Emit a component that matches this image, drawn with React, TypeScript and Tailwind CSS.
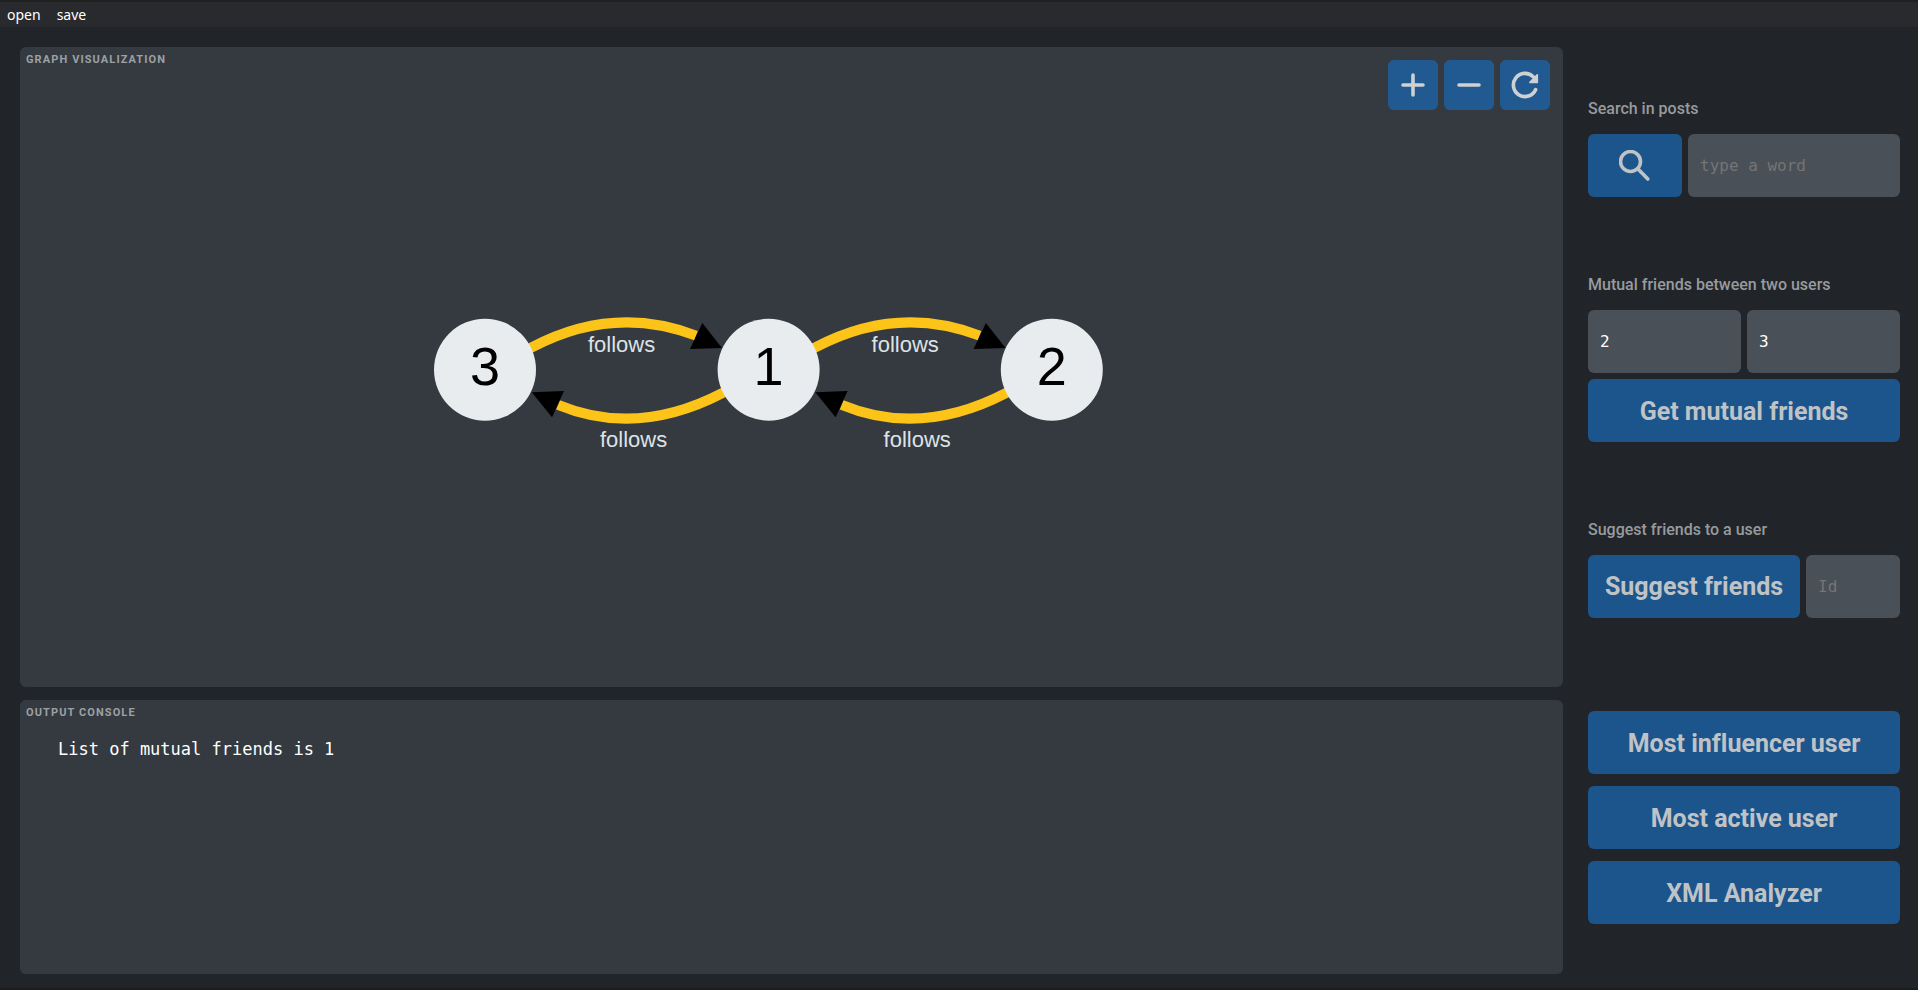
import type { ReactNode } from "react";

const BUTTON_BASE =
  "flex h-[63px] min-w-0 cursor-pointer items-center justify-center rounded-md bg-[#1c558b] text-[#c0c3c6] hover:bg-[#2264a3]";
const BUTTON = `${BUTTON_BASE} pt-[2px] text-[25px] font-bold whitespace-nowrap [font-variant-ligatures:none]`;
const FIELD =
  "h-[63px] min-w-0 rounded-md bg-[#495057] px-3 font-['DejaVu_Sans_Mono',monospace] text-base text-white outline-none placeholder:text-[#757575]";
const TOOL =
  "flex size-[50px] cursor-pointer items-center justify-center rounded-md bg-[#215a91] text-[#cfd0d2] hover:bg-[#2264a3]";

const users = [
  { id: "3", x: 465 },
  { id: "1", x: 748.6 },
  { id: "2", x: 1031.8 },
];

function Icon({ children }: { children: ReactNode }) {
  return (
    <svg
      viewBox="-16 -16 32 32"
      aria-hidden="true"
      className="size-8 fill-none stroke-current stroke-[3.6] [stroke-linecap:round] [stroke-linejoin:round]"
    >
      {children}
    </svg>
  );
}

function FollowPair({ x }: { x: number }) {
  return (
    <g transform={`translate(${x} 0)`}>
      <path d="M40 304L47 300.3Q129 257.2 211 288.7" fill="none" stroke="#fcc419" strokeWidth="10" />
      <path d="M217.3 276L205 302L237 301Z" />
      <path d="M244.5 342.3L237.5 346Q152 390.5 73 357.8" fill="none" stroke="#fcc419" strokeWidth="10" />
      <path d="M46.7 345.3L79 344L67 370.3Z" />
      <g fill="#dee2e6" fontSize="22">
        <text x="103" y="305">follows</text>
        <text x="115" y="400">follows</text>
      </g>
    </g>
  );
}

function Graph() {
  return (
    <svg
      viewBox="0 0 1543 640"
      role="img"
      aria-label="Follow graph"
      className="h-full min-h-0 w-full [grid-area:1/1] font-['Liberation_Sans',sans-serif]"
    >
      {users.slice(0, -1).map((user) => (
        <FollowPair key={user.id} x={user.x} />
      ))}
      {users.map((user) => (
        <g key={user.id}>
          <circle cx={user.x} cy="322.7" r="51" fill="#e9ecef" />
          <text x={user.x} y="338" fontSize="54" textAnchor="middle">
            {user.id}
          </text>
        </g>
      ))}
    </svg>
  );
}

function PanelTitle({ children }: { children: ReactNode }) {
  return (
    <h2 className="text-[11px] leading-4 font-bold tracking-widest text-[#9da0a4] uppercase">{children}</h2>
  );
}

function Group({ label, htmlFor, children }: { label: string; htmlFor: string; children: ReactNode }) {
  return (
    <section className="flex flex-col gap-[13px]">
      <label htmlFor={htmlFor} className="text-base leading-6 font-medium text-[#989b9e]">
        {label}
      </label>
      {children}
    </section>
  );
}

export default function App() {
  return (
    <div className="flex min-h-screen flex-col border-t-2 border-b-2 border-t-[#1f2020] border-b-[#1b1d21] bg-[#212529] font-[Roboto,sans-serif]">
      <nav className="flex h-[25px] items-center gap-4 bg-[#292a2d] px-[7px] font-['Noto_Sans',sans-serif] text-sm text-white">
        <button type="button" className="cursor-pointer">open</button>
        <button type="button" className="cursor-pointer">save</button>
      </nav>
      <main className="flex flex-1 gap-[25px] pt-5 pr-[18px] pb-[14px] pl-5">
        <div className="grid min-w-0 flex-1 grid-rows-[70fr_30fr] gap-[13px]">
          <section className="grid min-h-0 rounded-md bg-[#343a40]">
            <Graph />
            <div className="flex items-start justify-between [grid-area:1/1]">
              <div className="px-[6px] pt-[5px]">
                <PanelTitle>Graph visualization</PanelTitle>
              </div>
              <div className="flex gap-[6px] p-[13px]">
                <button type="button" aria-label="Zoom in" className={TOOL}>
                  <Icon>
                    <path d="M0-10V10M-10 0H10" />
                  </Icon>
                </button>
                <button type="button" aria-label="Zoom out" className={TOOL}>
                  <Icon>
                    <path d="M-10 0H10" />
                  </Icon>
                </button>
                <button type="button" aria-label="Reset view" className={TOOL}>
                  <Icon>
                    <path d="M10.6 4.7A11.6 11.6 0 1 1 8.2-8.2L9.5-7" />
                    <path d="M12.3-10.2V-2.6H4.9Z" fill="currentColor" strokeWidth="1.6" />
                  </Icon>
                </button>
              </div>
            </div>
          </section>
          <section className="min-h-0 rounded-md bg-[#343a40] px-[6px] pt-[5px]">
            <PanelTitle>Output console</PanelTitle>
            <output className="block px-8 pt-4 font-['DejaVu_Sans_Mono',monospace] text-[17px] leading-6 text-white">
              List of mutual friends is 1
            </output>
          </section>
        </div>
        <aside className="flex w-[312px] shrink-0 flex-col justify-between py-[50px]">
          <Group label="Search in posts" htmlFor="word">
            <div className="flex gap-[6px]">
              <button type="button" aria-label="Search" className={`${BUTTON_BASE} w-[94px]`}>
                <Icon>
                  <circle cx="-4.5" cy="-4.5" r="10" />
                  <path d="M4 4L12.8 13" />
                </Icon>
              </button>
              <input id="word" type="text" placeholder="type a word" className={`${FIELD} flex-1`} />
            </div>
          </Group>
          <Group label="Mutual friends between two users" htmlFor="first-user">
            <div className="grid grid-cols-2 gap-[6px]">
              <input id="first-user" type="text" defaultValue="2" className={FIELD} />
              <input aria-label="Second user" type="text" defaultValue="3" className={FIELD} />
              <button type="button" className={`${BUTTON} col-span-2`}>
                Get mutual friends
              </button>
            </div>
          </Group>
          <Group label="Suggest friends to a user" htmlFor="user-id">
            <div className="flex gap-[6px]">
              <button type="button" className={`${BUTTON} flex-1`}>
                Suggest friends
              </button>
              <input id="user-id" type="text" placeholder="Id" className={`${FIELD} w-[94px]`} />
            </div>
          </Group>
          <div className="flex flex-col gap-3 pt-[18px]">
            <button type="button" className={BUTTON}>Most influencer user</button>
            <button type="button" className={BUTTON}>Most active user</button>
            <button type="button" className={BUTTON}>XML Analyzer</button>
          </div>
        </aside>
      </main>
    </div>
  );
}
